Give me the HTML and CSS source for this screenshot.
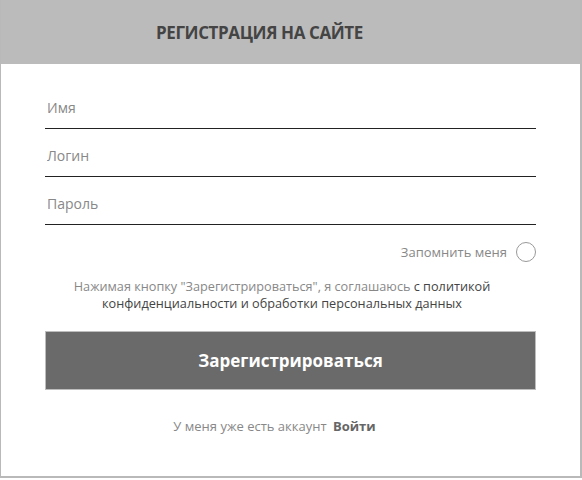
FILE: index.html
```html
<!DOCTYPE html>
<html lang="ru">
<head>
  <meta charset="UTF-8">
  <meta name="viewport" content="width=device-width, initial-scale=1.0">
  <title>Регистрация на сайте</title>
  <link rel="stylesheet" href="styles.css">
</head>
<body>
  <div class="register-box">

    <!-- Заголовок -->
    <div class="register-header">
      <h1>Регистрация на сайте</h1>
    </div>

    <!-- Форма -->
    <form class="register-form" onsubmit="return false;">
      <input type="text" class="field" placeholder="Имя">
      <input type="text" class="field" placeholder="Логин">
      <input type="password" class="field" placeholder="Пароль">

      <label class="remember">
        <span>Запомнить меня</span>
        <input type="checkbox">
        <span class="round"></span>
      </label>

      <p class="agree">
        Нажимая кнопку "Зарегистрироваться", я соглашаюсь <a href="#">с политикой конфиденциальности и обработки персональных данных</a>
      </p>

      <button type="submit" class="submit-btn">Зарегистрироваться</button>

      <p class="login-link">У меня уже есть аккаунт <a href="#">Войти</a></p>
    </form>
  </div>
</body>
</html>
```

FILE: styles.css
```css
/* Основа */
body {
  font-family: 'Open Sans', 'Noto Sans', sans-serif;
  margin: 0;
  padding: 0;
  background: #fff;
}

.register-box {
  height: 478px;
  border-left: 1px solid #b9b9b9;
  border-right: 2px solid #b9b9b9;
  border-bottom: 2px solid #b9b9b9;
  background: #fff;
  box-sizing: border-box;
}

/* Шапка */
.register-header {
  height: 64px;
  background: #bbbbbb;
  display: flex;
  align-items: center;
  justify-content: center;
}

.register-header h1 {
  margin: 0 62px 0 0;
  font-size: 17px;
  font-weight: 700;
  text-transform: uppercase;
  color: #444;
  letter-spacing: -0.4px;
}

/* Форма */
.register-form {
  display: flex;
  flex-direction: column;
  padding: 22px 44px 0 44px;
}

.register-form .field {
  font-family: inherit;
  font-size: 14px;
  color: #333;
  border: none;
  border-bottom: 1px solid #222;
  padding: 12px 2px 11px;
  margin-bottom: 5px;
  outline: none;
  background: transparent;
}

.register-form .field::placeholder {
  color: #888;
}

/* Запомнить меня */
.remember {
  display: flex;
  justify-content: flex-end;
  align-items: center;
  gap: 9px;
  margin-top: 12px;
  font-size: 13px;
  line-height: 20px;
  color: #888;
  cursor: pointer;
}

.remember input {
  display: none;
}

.remember .round {
  width: 18px;
  height: 18px;
  border: 1px solid #999;
  border-radius: 50%;
}

.remember input:checked + .round {
  background: #6a6a6a;
}

/* Согласие */
.agree {
  margin: 16px 17px 0 0;
  text-align: center;
  font-size: 12.7px;
  line-height: 17px;
  color: #888;
}

.agree a {
  color: #444;
  text-decoration: none;
}

/* Кнопка */
.submit-btn {
  margin-top: 19px;
  height: 59px;
  border: 1px solid #bdbdbd;
  background: #6a6a6a;
  color: #fff;
  font-family: inherit;
  font-size: 17px;
  font-weight: 700;
  cursor: pointer;
}

.submit-btn:hover {
  background: #5a5a5a;
}

/* Войти */
.login-link {
  margin: 27px 32px 0 0;
  text-align: center;
  font-size: 13px;
  color: #888;
}

.login-link a {
  color: #666;
  font-weight: 700;
  text-decoration: none;
  margin-left: 3px;
}
```
